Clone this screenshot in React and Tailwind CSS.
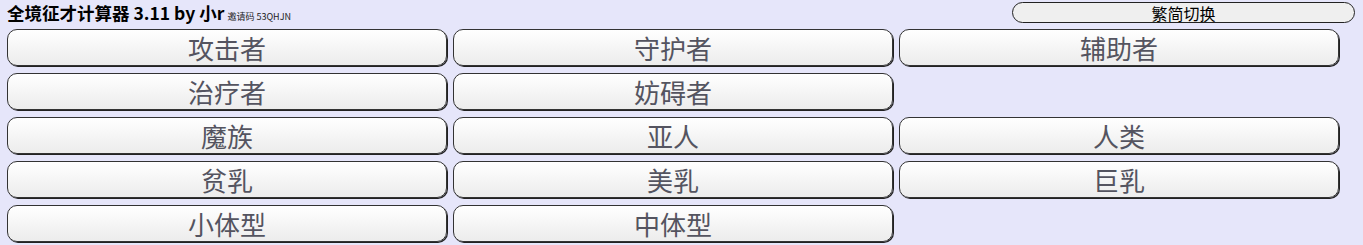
const rows = [
  ["攻击者", "守护者", "辅助者"],
  ["治疗者", "妨碍者"],
  ["魔族", "亚人", "人类"],
  ["贫乳", "美乳", "巨乳"],
  ["小体型", "中体型"],
];

const font = { fontFamily: '"Noto Sans CJK SC", "Noto Sans", sans-serif' };

export default function App() {
  return (
    <div className="w-[1363px] h-[245px] bg-[#e6e6fa] overflow-hidden" style={font}>
      {/* Header */}
      <div className="flex items-start justify-between h-[29px] pl-[7px] pr-[8px] pt-[2px]">
        <div className="flex items-baseline">
          <span className="text-[17.5px] font-bold leading-[22px] text-black">
            全境征才计算器 3.11 by 小r
          </span>
          <span className="text-[9px] leading-[10px] text-[#222] ml-[3px]">邀请码 53QHJN</span>
        </div>
        <button className="w-[343px] h-[21px] rounded-full border border-[#222] bg-[#efefef] text-[16px] leading-[18px] text-black flex items-center justify-center">
          繁简切换
        </button>
      </div>

      {/* Options */}
      <div className="grid grid-cols-[440px_440px_440px] gap-x-[6px] gap-y-[7px] pl-[7px]">
        {rows.map((row, r) =>
          [0, 1, 2].map((c) =>
            row[c] ? (
              <button
                key={`${r}-${c}`}
                className="h-[37px] rounded-[10px] border border-[#333] shadow-[1px_1px_0_#222] bg-gradient-to-b from-white to-[#ececec] text-[26px] leading-[30px] text-[#545460] flex items-center justify-center"
              >
                {row[c]}
              </button>
            ) : (
              <div key={`${r}-${c}`} />
            )
          )
        )}
      </div>
    </div>
  );
}
